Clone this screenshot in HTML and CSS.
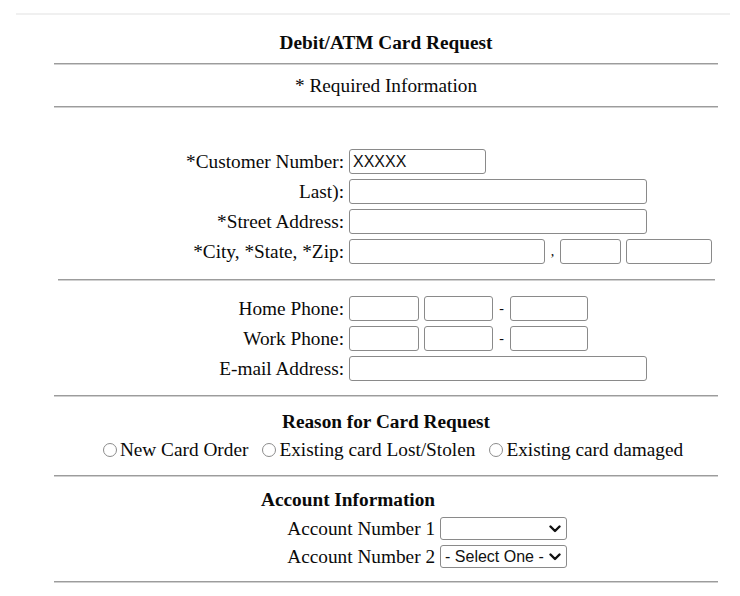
FILE: index.html
```html
<html>
  <head>
    <link rel="stylesheet" href="styles.css">
  </head>
  <body>
    <div class="page">
      <div class="card-form">
        <div class="title">Debit/ATM Card Request</div>
        <hr class="rule">
        <div class="required">* Required Information</div>
        <hr class="rule">

        <div class="fields fields-top">
          <label class="field-label">*Customer Number:</label>
          <div class="field-inputs"><input class="box w-customer" type="text" value="XXXXX"></div>
          <label class="field-label">Last):</label>
          <div class="field-inputs"><input class="box w-long" type="text"></div>
          <label class="field-label">*Street Address:</label>
          <div class="field-inputs"><input class="box w-long" type="text"></div>
          <label class="field-label">*City, *State, *Zip:</label>
          <div class="field-inputs">
            <input class="box w-city" type="text">
            <span class="sep">,</span>
            <input class="box w-state" type="text">
            <input class="box w-zip" type="text">
          </div>
        </div>
        <hr class="rule rule-short">

        <div class="fields fields-phone">
          <label class="field-label">Home Phone:</label>
          <div class="field-inputs">
            <input class="box w-area" type="text">
            <input class="box w-prefix" type="text">
            <span class="sep sep-dash">-</span>
            <input class="box w-line" type="text">
          </div>
          <label class="field-label">Work Phone:</label>
          <div class="field-inputs">
            <input class="box w-area" type="text">
            <input class="box w-prefix" type="text">
            <span class="sep sep-dash">-</span>
            <input class="box w-line" type="text">
          </div>
          <label class="field-label">E-mail Address:</label>
          <div class="field-inputs"><input class="box w-long" type="text"></div>
        </div>
        <hr class="rule">

        <div class="reason">
          <div class="heading">Reason for Card Request</div>
          <div class="radios">
            <label class="radio"><span class="radio-dot"></span>New Card Order</label>
            <label class="radio"><span class="radio-dot"></span>Existing card Lost/Stolen</label>
            <label class="radio"><span class="radio-dot"></span>Existing card damaged</label>
          </div>
        </div>
        <hr class="rule">

        <div class="accounts">
          <div class="heading acct-heading">Account Information</div>
          <div></div>
          <label class="acct-label">Account Number 1</label>
          <span class="select-wrap">
            <select class="acct-select"><option></option></select>
            <svg class="chevron" width="12" height="8" viewBox="0 0 12 8"><path d="M1.5 1.5 L6 6 L10.5 1.5" fill="none" stroke="#111" stroke-width="2.4" stroke-linecap="round" stroke-linejoin="round"/></svg>
          </span>
          <label class="acct-label">Account Number 2</label>
          <span class="select-wrap">
            <select class="acct-select"><option>- Select One -</option></select>
            <svg class="chevron" width="12" height="8" viewBox="0 0 12 8"><path d="M1.5 1.5 L6 6 L10.5 1.5" fill="none" stroke="#111" stroke-width="2.4" stroke-linecap="round" stroke-linejoin="round"/></svg>
          </span>
        </div>
        <hr class="rule">
      </div>
    </div>
  </body>
</html>
```

FILE: styles.css
```css
body { margin: 8px; font-family: "Liberation Serif", "Times New Roman", serif; font-size: 19.3px; color: #0a0a0a; background: #fff; }
.page { width: 714px; margin: 5px 0 0 8px; border-top: 2px solid #f0f0f0; }
.card-form { width: 664px; margin-left: 38px; }

.title { padding: 18px 0 10px; line-height: 20px; text-align: center; font-weight: bold; }
.required { padding: 11px 0 10px; line-height: 20px; text-align: center; }

.rule { margin: 0; border: 0; height: 0; border-top: 1px solid #9c9c9c; border-bottom: 1px solid #d0d0d0; }
.rule-short { margin: 0 3px 0 4px; }

.fields { display: grid; grid-template-columns: 290px auto; column-gap: 5px; row-gap: 5px; }
.fields-top { padding: 41px 0 15px; }
.fields-phone { padding: 15px 0 14px; }
.field-label { text-align: right; line-height: 25px; }
.field-inputs { display: flex; align-items: center; gap: 5px; }
.sep { width: 5px; text-align: center; font-size: 14px; }
.sep-dash { width: 7px; }

.box { box-sizing: border-box; height: 25px; margin: 0; padding: 1px 3px; border: 1px solid #8a8a8a; border-radius: 3px; font-family: "Liberation Sans", Arial, sans-serif; font-size: 16px; color: #111; }
.w-customer { width: 137px; }
.w-long { width: 298px; }
.w-city { width: 196px; }
.w-state { width: 61px; }
.w-zip { width: 86px; }
.w-area { width: 70px; }
.w-prefix { width: 69px; }
.w-line { width: 78px; }

.heading { font-weight: bold; line-height: 20px; text-align: center; }
.reason { padding: 15px 0 15px; }
.radios { display: flex; justify-content: center; gap: 14px; margin-top: 8px; line-height: 20px; padding-left: 14px; }
.radio { display: flex; align-items: center; }
.radio-dot { box-sizing: border-box; width: 14px; height: 14px; margin-right: 3px; border: 1px solid #8c8c8c; border-radius: 50%; background: #fff; }

.accounts { display: grid; grid-template-columns: auto auto; justify-content: start; column-gap: 5px; row-gap: 5px; margin-left: 207px; padding: 13px 0 13px; }
.acct-heading { margin-bottom: 2px; }
.acct-label { text-align: right; line-height: 23px; }
.select-wrap { position: relative; display: block; width: 127px; height: 23px; }
.acct-select { appearance: none; -webkit-appearance: none; box-sizing: border-box; width: 127px; height: 23px; margin: 0; padding: 0 18px 0 4px; border: 1px solid #8a8a8a; border-radius: 3px; font-family: "Liberation Sans", Arial, sans-serif; font-size: 16px; color: #111; background: #fff; }
.chevron { position: absolute; right: 6px; top: 8px; pointer-events: none; }
```
